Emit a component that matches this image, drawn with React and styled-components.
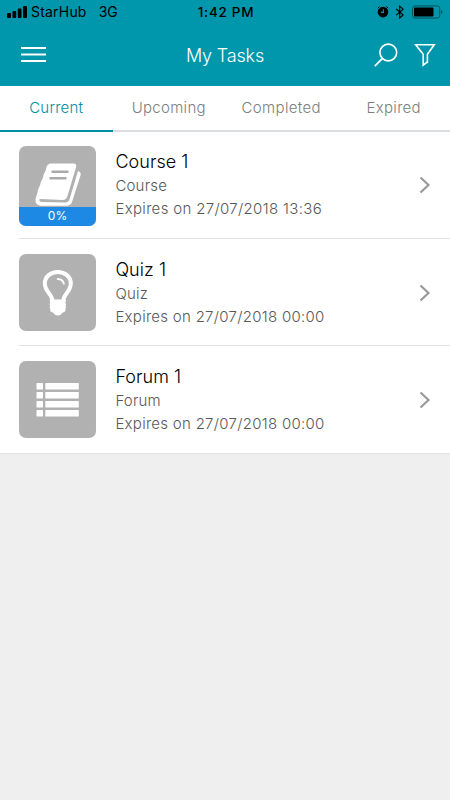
import React, { useState } from 'react';
import styled, { createGlobalStyle } from 'styled-components';

const GlobalStyle = createGlobalStyle`
  body {
    margin: 0;
    background: #efefef;
    font-family: Inter, "Liberation Sans", sans-serif;
  }

  * {
    box-sizing: border-box;
  }
`;

const Screen = styled.div`
  width: 100%;
  min-height: 100vh;
  background: #efefef;
`;

const Header = styled.header`
  height: 86px;
  background: #0097ac;
`;

const StatusBar = styled.div`
  display: grid;
  grid-template-columns: 1fr auto 1fr;
  align-items: center;
  height: 24px;
  padding: 0 7px;
  color: #000;
  font-size: 14px;
  line-height: 24px;
`;

const StatusSide = styled.div`
  display: flex;
  align-items: center;
  height: 24px;
  justify-content: ${(props) => (props.$end ? 'flex-end' : 'flex-start')};
`;

const Carrier = styled.span`
  margin: 0 12px 0 4px;
  font-weight: 370;
  letter-spacing: 0.2px;
`;

const Network = styled.span`
  font-weight: 370;
`;

const Clock = styled.span`
  margin: 0 0 0 2px;
  font-size: 13.5px;
  font-weight: 500;
  letter-spacing: 0.7px;
`;

const NavBar = styled.div`
  display: grid;
  grid-template-columns: 1fr auto 1fr;
  align-items: center;
  height: 62px;
  padding: 0 14px 2px 21px;
`;

const Title = styled.h1`
  margin: 2px 0 0 -7px;
  color: #fff;
  font-size: 18px;
  font-weight: 350;
  letter-spacing: -0.15px;
`;

const Actions = styled.div`
  display: flex;
  justify-content: flex-end;
  gap: 16px;
  margin-top: 2px;
`;

const IconButton = styled.button`
  display: flex;
  justify-self: start;
  padding: 0;
  border: 0;
  background: none;
  color: #fff;
`;

const Tabs = styled.nav`
  display: grid;
  grid-template-columns: repeat(4, 1fr);
  height: 46px;
  background: #fff;
`;

const Tab = styled.button`
  padding: 0 0 1px;
  border: 0;
  border-bottom: 2px solid ${(props) => (props.$active ? '#008ea3' : '#d9dddf')};
  background: #fff;
  color: ${(props) => (props.$active ? '#008ea3' : '#7d7d7d')};
  font-family: inherit;
  font-size: 15px;
  font-weight: 350;
  letter-spacing: ${(props) => props.$spacing}px;
`;

const TaskList = styled.ul`
  margin: 0;
  padding: 0 0 0 19px;
  list-style: none;
  background: #fff;
  border-bottom: 1px solid #e2e2e2;
`;

const TaskRow = styled.li`
  display: flex;
  align-items: flex-start;
  height: 106px;
  padding: 14px 19px 0 0;

  & + & {
    height: 107px;
    padding-top: 15px;
    border-top: 1px solid #e0e0e0;
  }

  & + &:last-child {
    height: 108px;
  }
`;

const Thumb = styled.div`
  display: flex;
  flex-direction: column;
  flex: none;
  width: 77px;
  height: ${(props) => (props.$tall ? 80 : 77)}px;
  border-radius: 7px;
  background: #b1b1b1;
  overflow: hidden;

  svg {
    flex: none;
  }
`;

const Progress = styled.div`
  height: 19px;
  margin-top: -17px;
  background: #1e88e5;
  color: #fff;
  font-size: 12px;
  line-height: 18px;
  text-align: center;
`;

const Details = styled.div`
  flex: 1;
  padding: 4px 0 0 19.4px;
  white-space: nowrap;
`;

const Name = styled.div`
  color: #000;
  font-size: 18px;
  font-weight: 340;
  line-height: 24px;
  letter-spacing: 0.05px;
`;

const Meta = styled.div`
  color: #585858;
  font-size: 15px;
  font-weight: 340;
  line-height: 23px;
  letter-spacing: ${(props) => props.$spacing || 0.2}px;
`;

const Chevron = styled.svg`
  flex: none;
  margin-top: 29.5px;
`;

const SignalIcon = () => (
  <svg width="20" height="12" viewBox="0 0 20 12">
    <rect x="0" y="7" width="4" height="5" rx="1" />
    <rect x="5.5" y="5" width="3.7" height="7" rx="1" />
    <rect x="10.8" y="2.5" width="3.7" height="9.5" rx="1" />
    <rect x="16" y="0" width="4" height="12" rx="1" />
  </svg>
);

// alarm, bluetooth and battery
const StatusIcons = () => (
  <svg width="66" height="14" viewBox="0 0 66 14">
    <circle cx="6" cy="7.1" r="5.3" />
    <path d="M.8 3.1 2.6 1.5M11.2 3.1 9.4 1.5" stroke="#000" strokeWidth="1" />
    <path d="M6.4 4.2v3.2H3.8" fill="none" stroke="#0097ac" strokeWidth="1.1" />
    <path d="M19.3 4 26.2 10l-3.5 3V1.2l3.5 3-6.9 6" fill="none" stroke="#000" strokeWidth="1.1" />
    <rect x="35.5" y=".9" width="27.2" height="12.2" rx="2.5" fill="none" stroke="#00515c" />
    <rect x="37" y="2.5" width="19.5" height="9" rx="1" />
    <path d="M64.2 5c1.6.8 1.6 3.2 0 4z" fill="#00424b" />
  </svg>
);

const MenuIcon = () => (
  <svg width="25" height="17" viewBox="0 0 25 17">
    <path d="M0 2h25M0 8.5h25M0 15h25" stroke="currentColor" strokeWidth="2" />
  </svg>
);

const SearchIcon = () => (
  <svg width="24" height="24" viewBox="0 0 24 24" fill="none" stroke="currentColor" strokeWidth="1.6">
    <circle cx="14.3" cy="9.5" r="8.4" />
    <path d="M8.2 15.7.8 23.2" strokeWidth="1.8" />
  </svg>
);

const FilterIcon = () => (
  <svg width="22" height="24" viewBox="0 0 22 24" fill="none" stroke="currentColor" strokeWidth="1.6">
    <path d="M1.6 1.8h18.6l-6.8 9.4v7.8l-4.2 3.2v-11z" />
  </svg>
);

const BookIcon = () => (
  <svg width="77" height="78" viewBox="0 0 77 78">
    <path
      d="M32 17.5H54.5Q58 17.5 57 21.5L48.3 50.5Q47 54 43.5 54L22 53Q20 53 20.2 54.2Q20.5 56 23 56L46.5 56.5Q49.5 56.3 50.5 53.5L59 25Q62.5 26 61.5 29.5L53 56Q51.5 59.8 47.5 59.8H21.5Q16 59 16.5 53.5C17 49.5 18.5 47.8 18.8 45C19 42 21 40.3 21.5 37.5C21.8 34.8 23.8 33.5 24.3 30.5C24.5 27.5 26.5 26 27 23.3C27.5 19.7 29 17.5 32 17.5Z"
      fill="#fff"
    />
    <path d="M32.5 25.8H49.5M30.5 32.3H47.5" stroke="#aaa" strokeWidth="2.4" />
  </svg>
);

const BulbIcon = () => (
  <svg width="77" height="77" viewBox="0 0 77 77">
    <path
      d="M33.5 47C33.5 40.5 25.8 37.5 25.8 29.5C25.8 22.5 31.8 18 38.8 18S51.8 22.5 51.8 29.5C51.8 37.5 44.2 40.5 44.2 47"
      fill="none"
      stroke="#fff"
      strokeWidth="4"
    />
    <path
      d="M31 45.5H46.7Q47.5 47 46.3 48.5Q48 50 46.5 52Q48 53.5 46.3 55Q47.5 57.5 43.5 58.7Q42 61.4 38.8 61.4T34.2 58.7Q30.2 57.5 31.4 55Q29.7 53.5 31.2 52Q29.7 50 31.4 48.5Q30.2 47 31 45.5Z"
      fill="#fff"
    />
    <path d="M38.8 25Q43.8 25.2 44.8 29.6" fill="none" stroke="#fff" strokeWidth="2" strokeLinecap="round" />
  </svg>
);

const ListIcon = () => (
  <svg width="77" height="77" viewBox="0 0 77 77" fill="#fff">
    {[22, 31, 40, 49].map((y) => (
      <React.Fragment key={y}>
        <rect x="17.5" y={y} width="6.5" height="6.5" rx="0.5" />
        <rect x="26.3" y={y} width="33.5" height="6.5" rx="0.5" />
      </React.Fragment>
    ))}
  </svg>
);

const tabs = [
  { label: 'Current', spacing: 0.25 },
  { label: 'Upcoming', spacing: 0.3 },
  { label: 'Completed', spacing: 0.35 },
  { label: 'Expired', spacing: 0.3 },
];

const tasks = [
  { name: 'Course 1', type: 'Course', expires: '27/07/2018 13:36', Icon: BookIcon, progress: '0%' },
  { name: 'Quiz 1', type: 'Quiz', expires: '27/07/2018 00:00', Icon: BulbIcon },
  { name: 'Forum 1', type: 'Forum', expires: '27/07/2018 00:00', Icon: ListIcon },
];

function Task({ task }) {
  const { name, type, expires, Icon, progress } = task;

  return (
    <TaskRow>
      <Thumb $tall={progress}>
        <Icon />
        {progress && <Progress>{progress}</Progress>}
      </Thumb>
      <Details>
        <Name>{name}</Name>
        <Meta>{type}</Meta>
        <Meta $spacing={progress ? 0.33 : 0.28}>Expires on {expires}</Meta>
      </Details>
      <Chevron width="12" height="18" viewBox="0 0 12 18" fill="none" stroke="#999" strokeWidth="2.2">
        <path d="M1.5 1.5 9.5 9l-8 7.5" />
      </Chevron>
    </TaskRow>
  );
}

export default function App() {
  const [active, setActive] = useState('Current');

  return (
    <Screen>
      <GlobalStyle />
      <Header>
        <StatusBar>
          <StatusSide>
            <SignalIcon />
            <Carrier>StarHub</Carrier>
            <Network>3G</Network>
          </StatusSide>
          <Clock>1:42 PM</Clock>
          <StatusSide $end>
            <StatusIcons />
          </StatusSide>
        </StatusBar>
        <NavBar>
          <IconButton aria-label="Menu"><MenuIcon /></IconButton>
          <Title>My Tasks</Title>
          <Actions>
            <IconButton aria-label="Search"><SearchIcon /></IconButton>
            <IconButton aria-label="Filter"><FilterIcon /></IconButton>
          </Actions>
        </NavBar>
      </Header>
      <Tabs>
        {tabs.map(({ label, spacing }) => (
          <Tab key={label} $active={label === active} $spacing={spacing} onClick={() => setActive(label)}>
            {label}
          </Tab>
        ))}
      </Tabs>
      <TaskList>
        {tasks.map((task) => (
          <Task key={task.name} task={task} />
        ))}
      </TaskList>
    </Screen>
  );
}
